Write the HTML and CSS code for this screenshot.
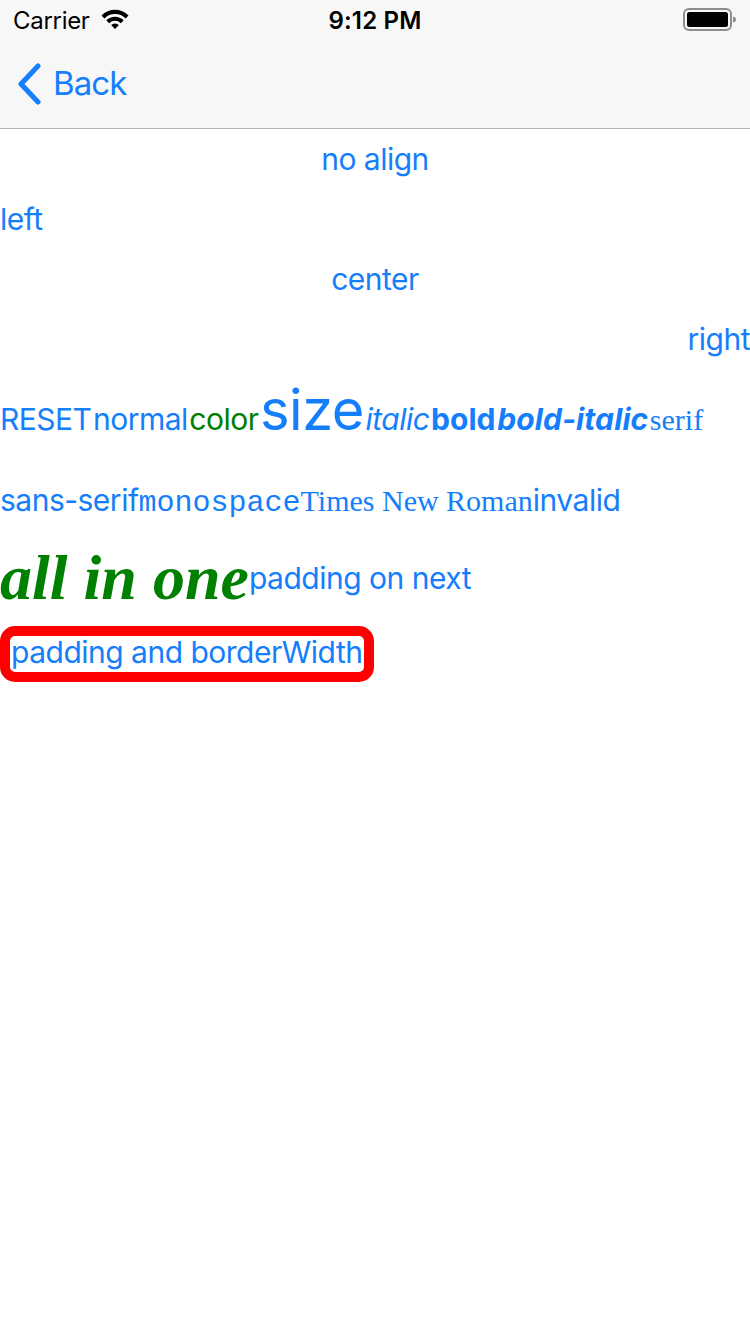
FILE: index.html
```html
<!DOCTYPE html>
<html>
<head>
<meta charset="utf-8">
<link rel="stylesheet" href="styles.css">
</head>
<body>
<div class="topbar">
  <div class="status">
    <div class="status-left">
      <span class="carrier">Carrier</span>
      <svg class="wifi" width="30" height="22" viewBox="0 0 30 22">
        <path d="M1.5 7.5 A19 19 0 0 1 28.5 7.5 L25.6 10.4 A15 15 0 0 0 4.4 10.4 Z" fill="#000"/>
        <path d="M6.3 12.3 A12.3 12.3 0 0 1 23.7 12.3 L20.8 15.2 A8.2 8.2 0 0 0 9.2 15.2 Z" fill="#000"/>
        <path d="M11.1 17.1 A5.6 5.6 0 0 1 18.9 17.1 L15 21 Z" fill="#000"/>
      </svg>
    </div>
    <div class="time">9:12 PM</div>
    <div class="status-right">
      <svg class="battery" width="54" height="24" viewBox="0 0 54 24">
        <rect x="1" y="1" width="47" height="21" rx="5" ry="5" fill="none" stroke="#8e8e8e" stroke-width="2"/>
        <rect x="4" y="4" width="41" height="15" rx="2.5" ry="2.5" fill="#000"/>
        <path d="M50 8.5 Q53 9 53 11.5 Q53 14 50 14.5 Z" fill="#8e8e8e"/>
      </svg>
    </div>
  </div>
  <div class="nav">
    <svg class="chevron" width="26" height="42" viewBox="0 0 26 42">
      <path d="M22 3 L5 21 L22 39" fill="none" stroke="#147efb" stroke-width="5" stroke-linecap="round" stroke-linejoin="round"/>
    </svg>
    <span class="back">Back</span>
  </div>
</div>

<main class="content">
  <div class="line line-noalign">no align</div>
  <div class="line line-left">left</div>
  <div class="line line-center">center</div>
  <div class="line line-right">right</div>

  <div class="mixed mixed-a">
    <span class="t">RESET</span><span class="t">normal</span><span class="t green">color</span><span class="t big">size</span><span class="t ital">italic</span><span class="t bold">bold</span><span class="t bold ital">bold-italic</span><span class="t serif">serif</span>
  </div>

  <div class="mixed mixed-b">
    <span class="t">sans-serif</span><span class="t mono">monospace</span><span class="t serif">Times New Roman</span><span class="t">invalid</span>
  </div>

  <div class="mixed mixed-c">
    <span class="t allinone">all in one</span><span class="t">padding on next</span>
  </div>

  <div class="boxrow">
    <span class="box">padding and borderWidth</span>
  </div>
</main>
</body>
</html>
```
FILE: styles.css
```css
* { box-sizing: border-box; }
html, body {
  margin: 0;
  padding: 0;
  background: #ffffff;
}
body {
  width: 750px;
  height: 1334px;
  font-family: "Inter", "Roboto", "Liberation Sans", sans-serif;
  color: #157efb;
  overflow: hidden;
}

.topbar {
  background: #f7f7f7;
  border-bottom: 1px solid #b2b2b2;
}
.status {
  height: 40px;
  display: flex;
  align-items: center;
  justify-content: space-between;
  padding: 0 13px 0 13px;
  color: #000;
}
.status-left {
  display: flex;
  align-items: center;
  gap: 10px;
  width: 200px;
}
.carrier {
  font-size: 24px;
  font-weight: 400;
  letter-spacing: -0.3px;
}
.wifi { display: block; margin-top: -2px; }
.time {
  font-size: 24px;
  font-weight: 600;
  letter-spacing: 0.2px;
}
.status-right {
  width: 200px;
  display: flex;
  justify-content: flex-end;
}
.battery { display: block; }

.nav {
  height: 88px;
  display: flex;
  align-items: center;
  padding-left: 16px;
}
.chevron { display: block; margin-right: 11px; }
.back {
  font-size: 33px;
  color: #147efb;
  letter-spacing: -0.9px;
  margin-top: -2px;
}

.content {
  font-size: 30px;
  letter-spacing: -0.5px;
}
.line {
  height: 60px;
  line-height: 60px;
  white-space: nowrap;
}
.line-noalign, .line-center { text-align: center; }
.line-left { text-align: left; }
.line-right { text-align: right; }

.mixed {
  display: flex;
  align-items: baseline;
  white-space: nowrap;
}
.t { line-height: 1; }
.mixed-a { margin-top: 13px; gap: 1.5px; }
.mixed-b { margin-top: 47px; }
.mixed-c { margin-top: 28px; align-items: center; }

.green { color: #008000; }
.big { font-size: 56px; }
.ital { font-style: italic; }
.bold { font-weight: 700; letter-spacing: 0.1px; }
.serif { font-family: "Liberation Serif", serif; letter-spacing: 0; }
.mono { font-family: "Liberation Mono", monospace; letter-spacing: 0; }
.allinone {
  font-family: "Liberation Serif", serif;
  font-size: 64px;
  font-weight: 700;
  font-style: italic;
  letter-spacing: 0;
  color: #008000;
}

.boxrow {
  margin-top: 16px;
  display: flex;
}
.box {
  display: block;
  border: 10px solid #ff0000;
  border-radius: 15px;
  padding: 1px 2px 5px 1px;
  line-height: 1;
  white-space: nowrap;
}
```
